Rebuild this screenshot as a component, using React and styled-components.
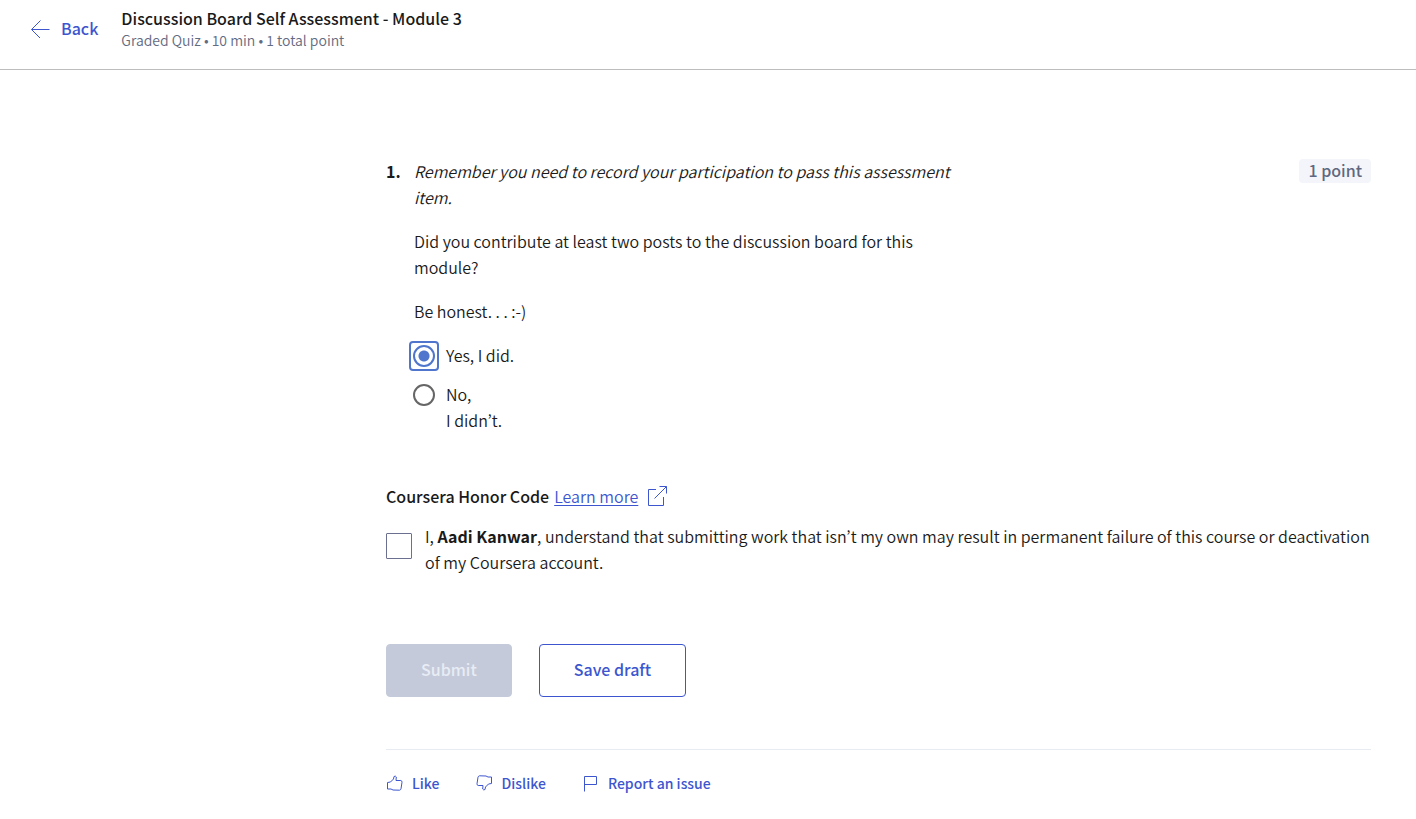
import React, { useState } from "react";
import styled, { createGlobalStyle, css } from "styled-components";

const blue = "#3d56cf";
const family = '"Noto Sans CJK KR", "Noto Sans", sans-serif';

const GlobalStyle = createGlobalStyle`
  *, *::before, *::after { box-sizing: border-box; }
  body {
    margin: 0;
    background: #fff;
    color: #1a1a1a;
    font: 350 16px/26px ${family};
  }
  button, input { font-family: inherit; }
  p, h1, h2 { margin: 0; }
  strong { font-weight: 700; }
`;

const Header = styled.header`
  display: flex;
  align-items: flex-start;
  gap: 23px;
  padding: 6px 32px 19px 31px;
  border-bottom: 1px solid #bdbdbd;
`;

const BackLink = styled.a`
  display: flex;
  align-items: center;
  gap: 10px;
  height: 44px;
  color: ${blue};
  font-weight: 500;
  text-decoration: none;
`;

const Title = styled.h1`
  font-size: 16px;
  font-weight: 500;
  line-height: 24px;
`;

const Subtitle = styled.p`
  color: #636b82;
  font-size: 14px;
  line-height: 20px;
`;

const Main = styled.main`
  padding: 88px 45px 24px 386px;
`;

const Question = styled.section`
  display: flex;
  align-items: flex-start;
`;

const Number = styled.strong`
  flex: none;
  width: 28px;
`;

const Prompt = styled.div`
  display: flex;
  flex-direction: column;
  gap: 18px;
  width: 544px;
`;

const Badge = styled.span`
  flex: none;
  margin: 1px 0 0 auto;
  padding: 0 9px 1px;
  border-radius: 4px;
  background: #f3f5fa;
  color: #5f6880;
  font-weight: 500;
  line-height: 23px;
`;

const Options = styled.div`
  display: flex;
  flex-direction: column;
  gap: 13px;
  width: 104px;
`;

const Option = styled.label`
  display: flex;
  align-items: flex-start;
  gap: 11px;
`;

const Radio = styled.input`
  appearance: none;
  flex: none;
  width: 22px;
  height: 22px;
  margin: 0;
  border: 2px solid #666;
  border-radius: 50%;
  &:checked {
    border-color: #4f76cc;
    background: radial-gradient(circle, #4f76cc 5px, transparent 6px);
  }
`;

const RadioFrame = styled.span`
  display: flex;
  flex: none;
  margin: -1px -4px -3px -5px;
  padding: 2px;
  border: 2px solid transparent;
  border-radius: 4px;
  ${(p) => p.$active && css`border-color: #4f76cc;`}
`;

const Honor = styled.section`
  margin-top: 50px;
`;

const HonorHeading = styled.div`
  display: flex;
  align-items: center;
  gap: 5px;
`;

const HonorTitle = styled.h2`
  font-size: 16px;
  font-weight: 500;
  line-height: 26px;
`;

const LearnMore = styled.a`
  display: flex;
  align-items: center;
  gap: 8px;
  color: ${blue};
  text-underline-offset: 2px;
`;

const Agreement = styled.label`
  display: flex;
  gap: 13px;
  margin-top: 14px;
`;

const Checkbox = styled.input`
  appearance: none;
  flex: none;
  width: 26px;
  height: 26px;
  margin: 10px 0 0;
  border: 1px solid #6b7090;
  border-radius: 1px;
  &:checked { background: ${blue}; }
`;

const Actions = styled.div`
  display: flex;
  gap: 27px;
  margin-top: 69px;
`;

const Button = styled.button`
  height: 53px;
  padding: 0 34px 4px;
  border: 1px solid ${blue};
  border-radius: 4px;
  background: #fff;
  color: ${blue};
  font-size: 16px;
  font-weight: 500;
  &:disabled {
    border-color: #c4cad9;
    background: #c4cad9;
    color: #e8ecf5;
  }
`;

const Feedback = styled.footer`
  display: flex;
  gap: 36px;
  margin-top: 52px;
  padding-top: 20px;
  border-top: 1px solid #e8ebf2;
`;

const FeedbackButton = styled.button`
  display: flex;
  align-items: center;
  gap: 8px;
  padding: 0;
  border: 0;
  background: none;
  color: ${blue};
  font-size: 14px;
  font-weight: 500;
  line-height: 26px;
`;

const Icon = styled.svg`
  display: block;
  flex: none;
  fill: none;
  stroke: currentColor;
  stroke-width: 1;
`;

const thumb = "M1.500 8.500L4.500 8 7.500 5 8 2.500Q9.500 1.500 10.300 3L10 6.500H14.800Q16.300 7 16 8.200L15 14.800Q14.600 16 13.500 16.200L7 16 5 15H1.500Z";

const options = ["Yes, I did.", "No, I\u00a0didn’t."];

export default function App() {
  const [answer, setAnswer] = useState(0);

  return (
    <>
      <GlobalStyle />
      <Header>
        <BackLink href="#back">
          <Icon width="20" height="20" viewBox="0 0 20 20">
            <path d="M18.500 11.500H.800M9.500 2.500l-9 9 9 9" />
          </Icon>
          Back
        </BackLink>
        <div>
          <Title>Discussion Board Self Assessment - Module 3</Title>
          <Subtitle>Graded Quiz • 10 min • 1 total point</Subtitle>
        </div>
      </Header>
      <Main>
        <Question>
          <Number>1.</Number>
          <Prompt>
            <p><em>Remember you need to record your participation to pass this assessment item.</em></p>
            <p>Did you contribute at least two posts to the discussion board for this module?</p>
            <p>Be honest. . . :-)</p>
            <Options role="radiogroup" aria-label="Your answer">
              {options.map((text, i) => (
                <Option key={text}>
                  <RadioFrame $active={answer === i}>
                    <Radio type="radio" name="answer" checked={answer === i} onChange={() => setAnswer(i)} />
                  </RadioFrame>
                  <span>{text}</span>
                </Option>
              ))}
            </Options>
          </Prompt>
          <Badge>1 point</Badge>
        </Question>
        <Honor>
          <HonorHeading>
            <HonorTitle>Coursera Honor Code</HonorTitle>
            <LearnMore href="#honor-code">
              Learn more
              <Icon width="22" height="22" viewBox="0 0 22 22">
                <path d="M10 4.500H2.500v16h15V12M8.500 13.500l12-12M13.500 1.500h7v7" />
              </Icon>
            </LearnMore>
          </HonorHeading>
          <Agreement>
            <Checkbox type="checkbox" />
            <span>
              I, <strong>Aadi Kanwar</strong>, understand that submitting work that isn’t my own may result in
              permanent failure of this course or deactivation of my Coursera account.
            </span>
          </Agreement>
        </Honor>
        <Actions>
          <Button type="button" disabled>Submit</Button>
          <Button type="button">Save draft</Button>
        </Actions>
        <Feedback>
          <FeedbackButton type="button">
            <Icon width="18" height="18" viewBox="0 0 18 18"><path d={thumb} /></Icon>
            Like
          </FeedbackButton>
          <FeedbackButton type="button">
            <Icon width="18" height="18" viewBox="0 0 18 18"><path d={thumb} transform="rotate(180 9 9)" /></Icon>
            Dislike
          </FeedbackButton>
          <FeedbackButton type="button">
            <Icon width="18" height="18" viewBox="0 0 18 18"><path d="M2.500 17.500v-15h12v8h-12" /></Icon>
            Report an issue
          </FeedbackButton>
        </Feedback>
      </Main>
    </>
  );
}
